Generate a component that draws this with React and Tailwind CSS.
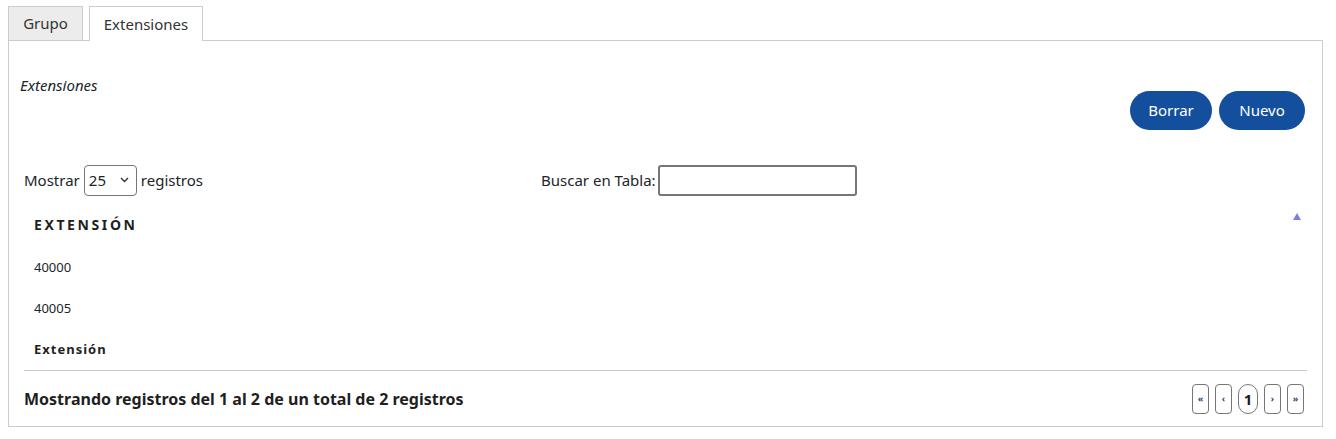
import React from "react";

const rows = ["40000", "40005"];

const PageButton = ({ label, active }) => (
  <button
    className={
      active
        ? "flex h-[30px] w-[20px] items-center justify-center rounded-[10px] border border-[#767676] bg-white text-[15px] font-bold text-[#1a1a1a]"
        : "flex h-[30px] w-[17px] items-center justify-center rounded-[4px] border border-[#767676] bg-white text-[9px] font-bold text-[#1a3f7a]"
    }
  >
    {label}
  </button>
);

export default function App() {
  const [length, setLength] = React.useState("25");
  const [search, setSearch] = React.useState("");

  return (
    <div
      className="min-h-[439px] bg-white px-[8px] pt-[6px] text-[#212529]"
      style={{ fontFamily: "'Noto Sans', 'Open Sans', sans-serif" }}
    >
      <div className="flex items-end gap-[6px]">
        <div className="flex h-[34px] w-[75px] items-center justify-center border border-b-0 border-[#cccccc] bg-[#ececec] text-[15px] text-[#333]">
          Grupo
        </div>
        <div className="relative z-10 -mb-px flex h-[35px] w-[114px] items-center justify-center border border-b-0 border-[#cccccc] bg-white text-[15px] text-[#333]">
          Extensiones
        </div>
      </div>

      <div className="h-[387px] w-[1315px] border border-[#cccccc] bg-white">
        <div className="pl-[11px] pt-[35px] text-[15px] italic leading-[18px]">
          Extensiones
        </div>

        <div className="-mt-[3px] flex justify-end gap-[7px] pr-[17px]">
          <button className="h-[39px] w-[82px] rounded-full bg-[#134f9c] text-[15px] text-white">
            Borrar
          </button>
          <button className="h-[39px] w-[86px] rounded-full bg-[#134f9c] text-[15px] text-white">
            Nuevo
          </button>
        </div>

        <div className="mt-[35px] flex items-center px-[15px] text-[15px]">
          <div className="flex w-[517px] items-center gap-[4px]">
            <span>Mostrar</span>
            <div className="relative">
              <select
                value={length}
                onChange={(e) => setLength(e.target.value)}
                className="h-[31px] w-[53px] appearance-none rounded-[4px] border border-[#767676] bg-white pl-[4px] text-[15px]"
              >
                <option value="10">10</option>
                <option value="25">25</option>
                <option value="50">50</option>
                <option value="100">100</option>
              </select>
              <svg
                className="pointer-events-none absolute right-[8px] top-[12px]"
                width="9"
                height="6"
                viewBox="0 0 9 6"
                fill="none"
                stroke="#333"
                strokeWidth="1.4"
              >
                <path d="M1 1l3.5 3.5L8 1" />
              </svg>
            </div>
            <span>registros</span>
          </div>
          <div className="flex items-center gap-[2px]">
            <span>Buscar en Tabla:</span>
            <input
              value={search}
              onChange={(e) => setSearch(e.target.value)}
              className="h-[31px] w-[199px] rounded-[3px] border-2 border-[#767676] bg-white px-1 outline-none"
            />
          </div>
        </div>

        <div className="mx-[15px] mt-[5px]">
          <div className="flex h-[46px] items-center justify-between pl-[10px] pr-[6px]">
            <span className="text-[14px] font-bold tracking-[2.6px] text-[#1f1f1f]">
              EXTENSIÓN
            </span>
            <svg width="8" height="7" viewBox="0 0 8 7" className="-mt-[16px]">
              <path d="M4 0L8 7H0z" fill="#7b7fdc" />
            </svg>
          </div>
          {rows.map((row) => (
            <div
              key={row}
              className="flex h-[41px] items-center pl-[10px] text-[13px]"
            >
              {row}
            </div>
          ))}
          <div className="flex h-[42px] items-center border-b border-[#cccccc] pl-[10px] text-[13px] font-bold tracking-[1px] text-[#1f1f1f]">
            Extensión
          </div>
          <div className="flex h-[56px] items-center justify-between">
            <span className="text-[16px] font-bold text-[#1f1f1f]">
              Mostrando registros del 1 al 2 de un total de 2 registros
            </span>
            <div className="flex items-center gap-[6px] pr-[3px]">
              <PageButton label="«" />
              <PageButton label="‹" />
              <PageButton label="1" active />
              <PageButton label="›" />
              <PageButton label="»" />
            </div>
          </div>
        </div>
      </div>
    </div>
  );
}
